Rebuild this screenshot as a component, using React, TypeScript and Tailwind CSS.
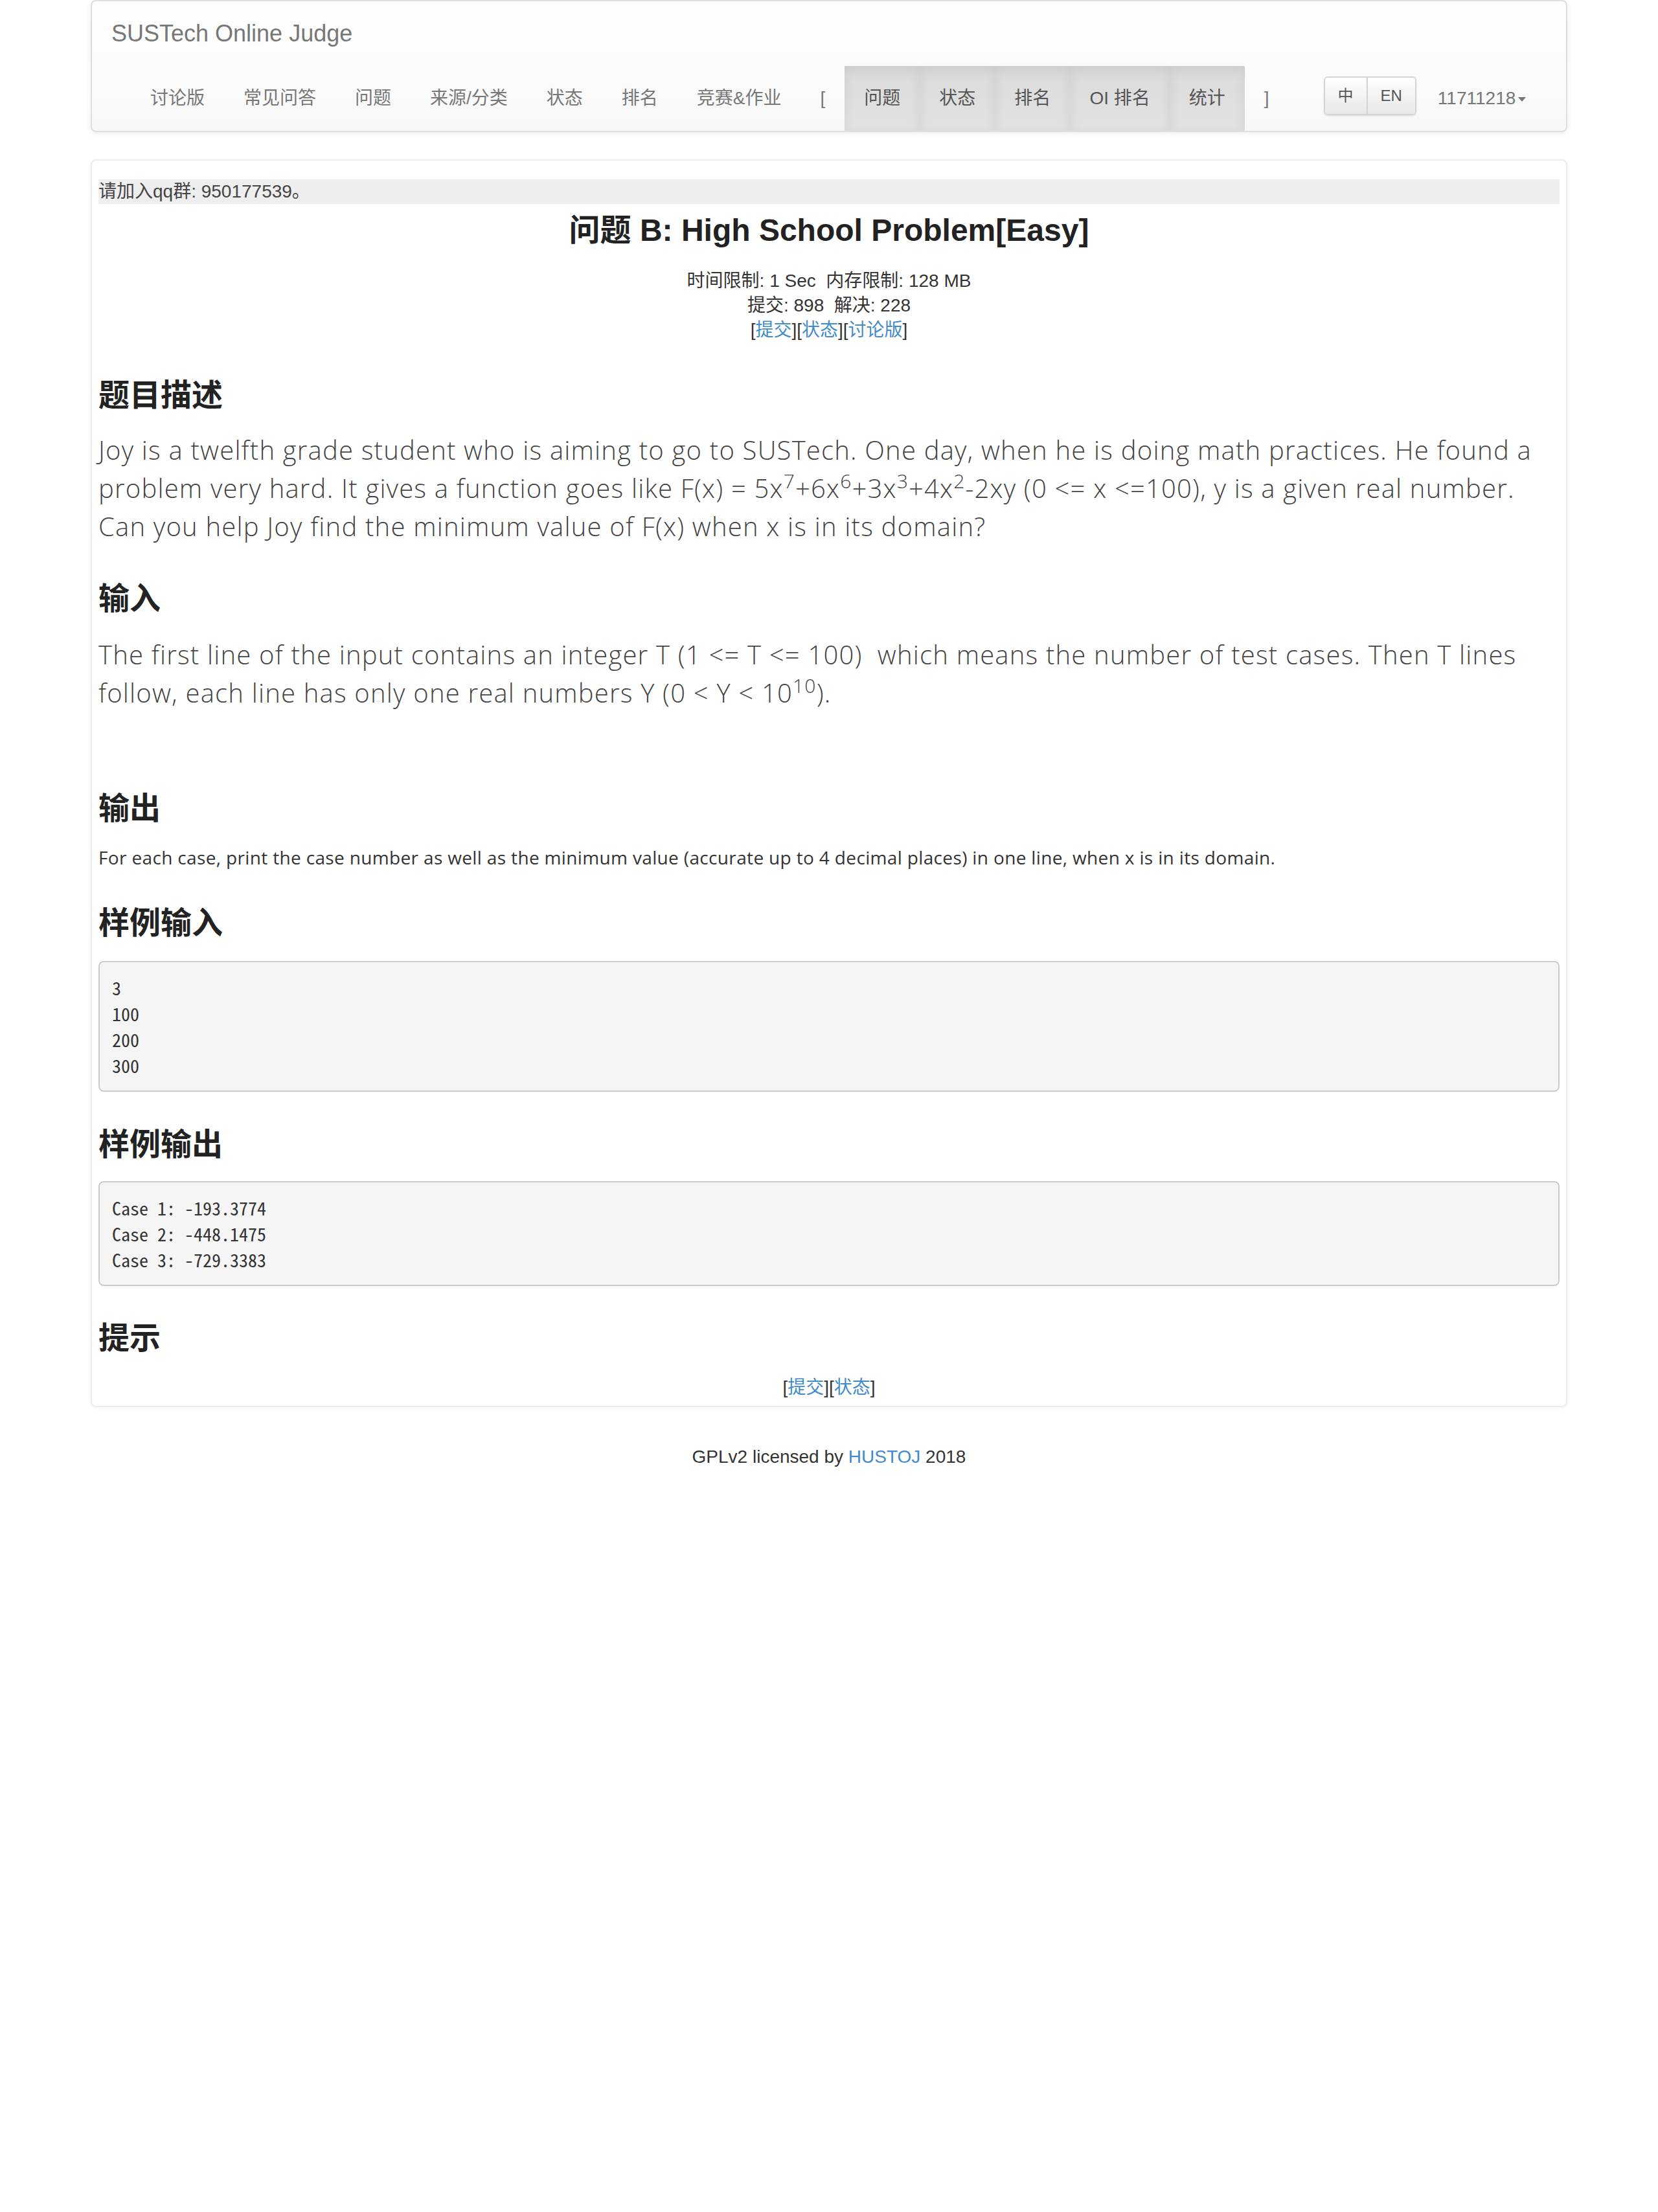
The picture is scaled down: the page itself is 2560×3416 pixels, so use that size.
import React from 'react';

const leftNav = ['讨论版', '常见问答', '问题', '来源/分类', '状态', '排名', '竞赛&作业'];
const contestNav = ['问题', '状态', '排名', 'OI 排名', '统计'];

function Navbar() {
  return (
    <nav className="rounded-[8px] border-2 border-[#dedede] bg-linear-to-b from-white to-[#f8f8f8] shadow-[0_2px_10px_rgba(0,0,0,0.075)]">
      <div className="flex h-[100px] items-center px-[30px] text-[36px] text-[#777]">SUSTech Online Judge</div>
      <div className="flex h-[100px] items-stretch pl-[60px] text-[28px] text-[#777]">
        {leftNav.map((item) => (
          <a key={item} className="flex items-center px-[30px]">
            {item}
          </a>
        ))}
        <span className="flex items-center px-[30px]">[</span>
        {contestNav.map((item) => (
          <a
            key={item}
            className="flex items-center bg-linear-to-b from-[#dbdbdb] to-[#e2e2e2] px-[30px] text-[#555] shadow-[inset_0_6px_18px_rgba(0,0,0,0.075)]"
          >
            {item}
          </a>
        ))}
        <span className="flex items-center px-[30px]">]</span>
        <div className="ml-[54px] flex items-start pt-[16px]">
          <div className="flex h-[60px] overflow-hidden rounded-[6px] border-2 border-[#d4d4d4] text-[24px] text-[#555] shadow-[0_2px_2px_rgba(0,0,0,0.075)]">
            <button className="bg-linear-to-b from-white to-[#e8e8e8] px-[20px]">中</button>
            <button className="border-l-2 border-[#d4d4d4] bg-linear-to-b from-white to-[#e8e8e8] px-[20px]">EN</button>
          </div>
        </div>
        <a className="ml-[3px] flex items-center px-[30px]">
          11711218
          <span className="ml-[4px] mt-[2px] inline-block h-0 w-0 border-x-[6px] border-t-[7px] border-x-transparent border-t-[#777]" />
        </a>
      </div>
    </nav>
  );
}

function Heading({ children, className = '' }: { children: React.ReactNode; className?: string }) {
  return (
    <h2 className={`h-[60px] font-['Noto_Sans_CJK_SC',sans-serif] text-[48px] font-bold leading-[54px] text-[#222] ${className}`}>
      {children}
    </h2>
  );
}

function Sup({ children }: { children: React.ReactNode }) {
  return <sup className="relative -top-[0.5em] align-baseline text-[0.75em] leading-none">{children}</sup>;
}

const link = 'text-[#428bca]';
const bigText =
  "font-['Open_Sans','Lato','Noto_Sans_CJK_SC',sans-serif] text-[40px] font-light leading-[59px] tracking-[1.2px] text-[#444]";

export default function App() {
  return (
    <div className="min-h-screen bg-white font-['Liberation_Sans','Noto_Sans_CJK_SC',sans-serif] text-[#333]">
      <div className="mx-auto w-[2340px] px-[30px]">
        <Navbar />

        <div className="mt-[42px] rounded-[8px] border-2 border-[#ececec] px-[10px] pb-[8px] pt-[29px] shadow-[0_2px_4px_rgba(0,0,0,0.04)]">
          <div className="h-[38px] bg-[#eee] text-[28px] leading-[38px] text-[#444]">请加入qq群: 950177539。</div>

          <h1 className="mt-[14px] text-center text-[48px] font-bold leading-[53px] text-[#222]">
            问题 B: High School Problem[Easy]
          </h1>

          <div className="mt-[33px] text-center text-[28px] leading-[38px]">
            <div>时间限制: 1 Sec{'\u00a0\u00a0'}内存限制: 128 MB</div>
            <div>提交: 898{'\u00a0\u00a0'}解决: 228</div>
            <div>
              [<a className={link}>提交</a>][<a className={link}>状态</a>][<a className={link}>讨论版</a>]
            </div>
          </div>

          <Heading className="mt-[50px]">题目描述</Heading>
          <p className={`mt-[26px] ${bigText}`}>
            Joy is a twelfth grade student who is aiming to go to SUSTech. One day, when he is doing math practices. He found a
            <br />
            problem very hard. It gives a function goes like F(x) = 5x<Sup>7</Sup>+6x<Sup>6</Sup>+3x<Sup>3</Sup>+4x<Sup>2</Sup>-2xy (0 &lt;= x &lt;=100), y is a given real number.
            <br />
            Can you help Joy find the minimum value of F(x) when x is in its domain?
          </p>

          <Heading className="mt-[51px]">输入</Heading>
          <p className={`mt-[28px] ${bigText}`}>
            The first line of the input contains an integer T (1 &lt;= T &lt;= 100){'\u00a0'} which means the number of test cases. Then T lines
            <br />
            follow, each line has only one real numbers Y (0 &lt; Y &lt; 10<Sup>10</Sup>).
          </p>

          <Heading className="mt-[118px]">输出</Heading>
          <p className="mt-[27px] font-['Open_Sans','Lato','Noto_Sans_CJK_SC',sans-serif] text-[28px] leading-[40px] tracking-[0.35px] text-[#333]">
            For each case, print the case number as well as the minimum value (accurate up to 4 decimal places) in one line, when x is in its domain.
          </p>

          <Heading className="mt-[50px]">样例输入</Heading>
          <pre className="mt-[30px] rounded-[8px] border-2 border-[#ccc] bg-[#f5f5f5] p-[19px] font-['Noto_Sans_Mono_CJK_SC','Liberation_Mono',monospace] text-[28px] leading-[40px] text-[#333]">
            {'3\n100\n200\n300'}
          </pre>

          <Heading className="mt-[50px]">样例输出</Heading>
          <pre className="mt-[28px] rounded-[8px] border-2 border-[#ccc] bg-[#f5f5f5] p-[19px] font-['Noto_Sans_Mono_CJK_SC','Liberation_Mono',monospace] text-[28px] leading-[40px] text-[#333]">
            {'Case 1: -193.3774\nCase 2: -448.1475\nCase 3: -729.3383'}
          </pre>

          <Heading className="mt-[49px]">提示</Heading>
          <div className="mt-[28px] text-center text-[28px] leading-[40px]">
            [<a className={link}>提交</a>][<a className={link}>状态</a>]
          </div>
        </div>

        <footer className="mt-[57px] text-center text-[28px] leading-[40px]">
          GPLv2 licensed by <a className={link}>HUSTOJ</a> 2018
        </footer>
      </div>
    </div>
  );
}
